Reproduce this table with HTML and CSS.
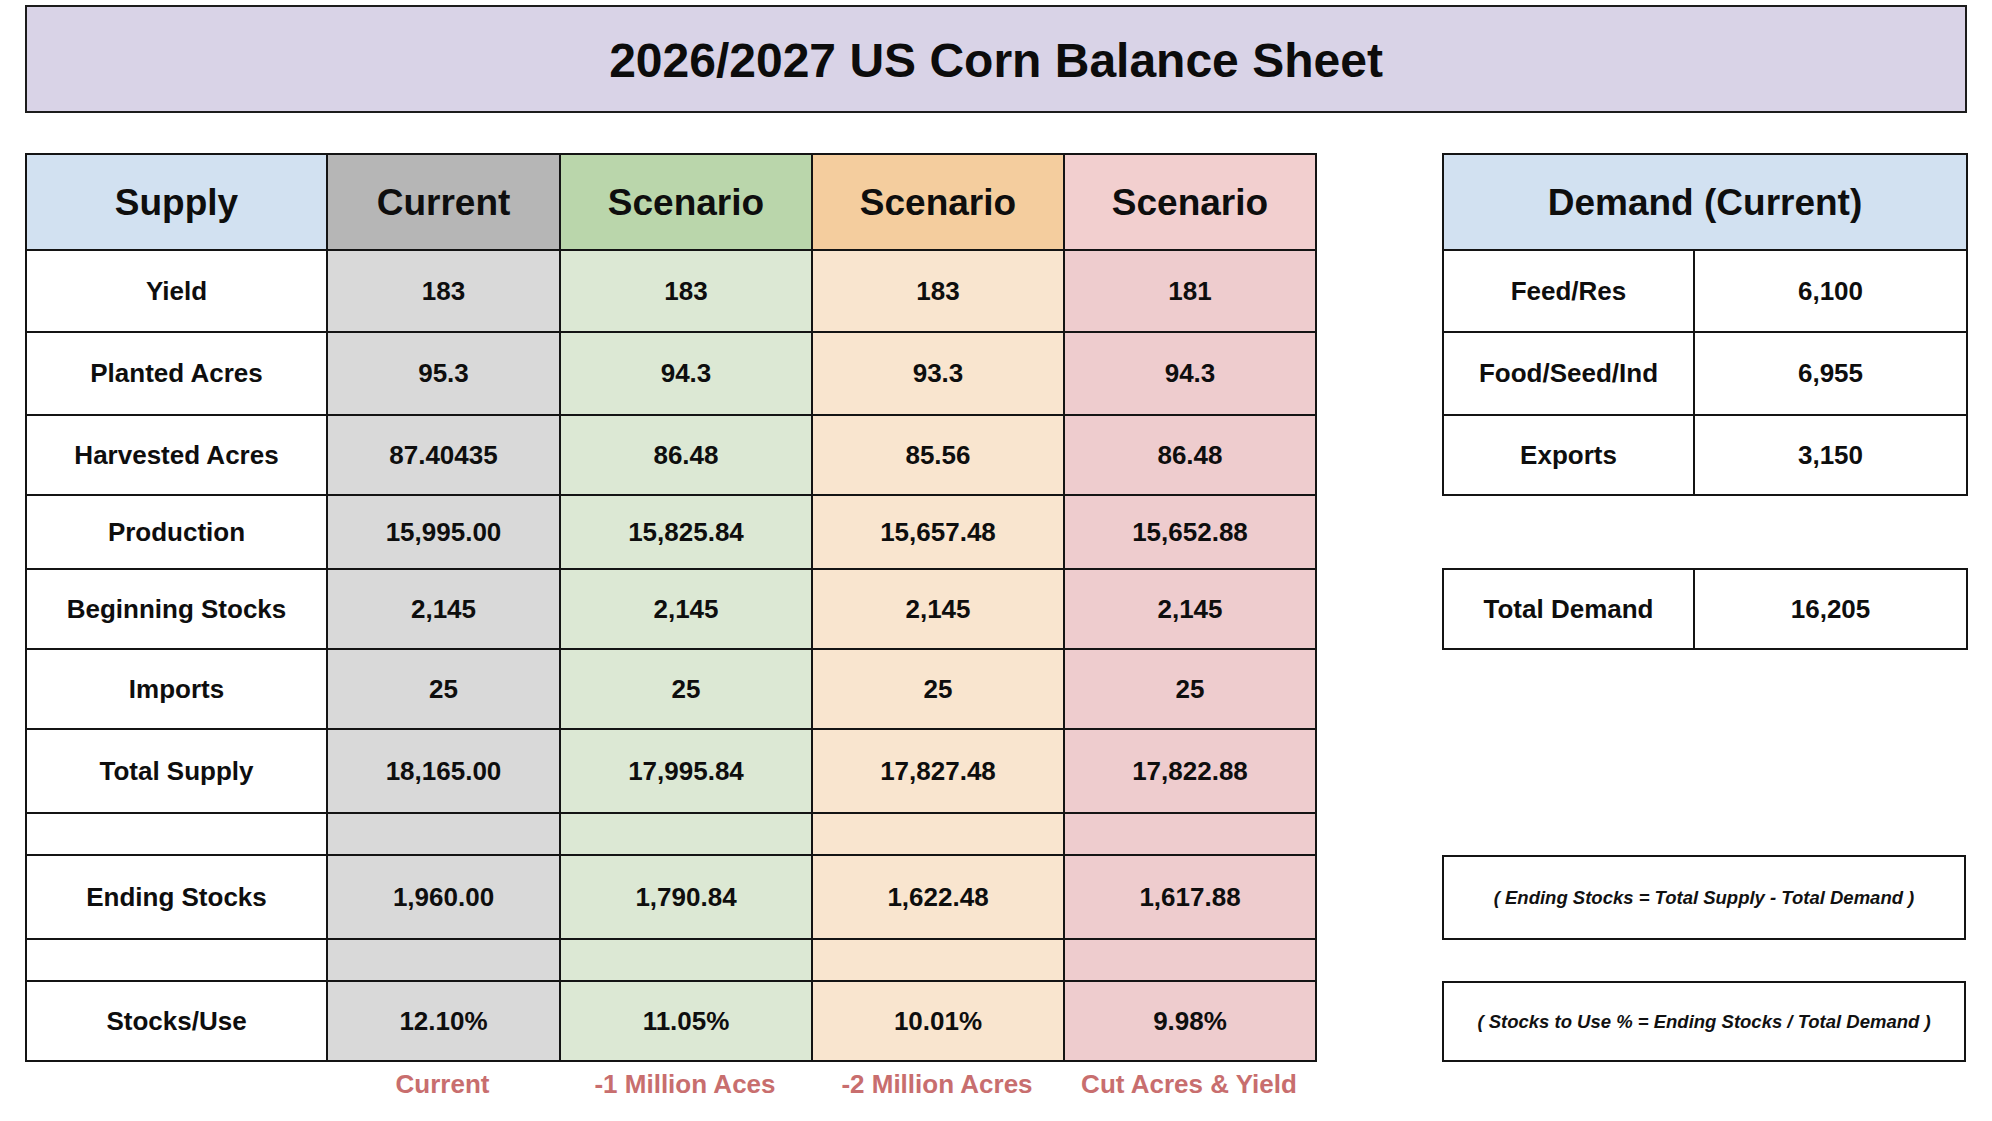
FILE: index.html
```html
<!DOCTYPE html>
<html lang="en">
<head>
<meta charset="utf-8">
<title>2026/2027 US Corn Balance Sheet</title>
<link rel="stylesheet" href="styles.css">
</head>
<body>
<div class="page">
  <header class="title-box">2026/2027 US Corn Balance Sheet</header>
  <div class="main">
    <section class="supply">
      <table class="sheet supply-table">
        <colgroup>
          <col class="c-label"><col class="c-cur"><col class="c-s1"><col class="c-s2"><col class="c-s3">
        </colgroup>
        <tr class="r-head">
          <th class="h-blue">Supply</th>
          <th class="h-gray">Current</th>
          <th class="h-green">Scenario</th>
          <th class="h-orange">Scenario</th>
          <th class="h-red">Scenario</th>
        </tr>
        <tr class="r-yield"><td>Yield</td><td class="gray">183</td><td class="green">183</td><td class="orange">183</td><td class="red">181</td></tr>
        <tr class="r-planted"><td>Planted Acres</td><td class="gray">95.3</td><td class="green">94.3</td><td class="orange">93.3</td><td class="red">94.3</td></tr>
        <tr class="r-harv"><td>Harvested Acres</td><td class="gray">87.40435</td><td class="green">86.48</td><td class="orange">85.56</td><td class="red">86.48</td></tr>
        <tr class="r-prod"><td>Production</td><td class="gray">15,995.00</td><td class="green">15,825.84</td><td class="orange">15,657.48</td><td class="red">15,652.88</td></tr>
        <tr class="r-beg"><td>Beginning Stocks</td><td class="gray">2,145</td><td class="green">2,145</td><td class="orange">2,145</td><td class="red">2,145</td></tr>
        <tr class="r-imp"><td>Imports</td><td class="gray">25</td><td class="green">25</td><td class="orange">25</td><td class="red">25</td></tr>
        <tr class="r-total"><td>Total Supply</td><td class="gray">18,165.00</td><td class="green">17,995.84</td><td class="orange">17,827.48</td><td class="red">17,822.88</td></tr>
        <tr class="r-blank"><td></td><td class="gray"></td><td class="green"></td><td class="orange"></td><td class="red"></td></tr>
        <tr class="r-end"><td>Ending Stocks</td><td class="gray">1,960.00</td><td class="green">1,790.84</td><td class="orange">1,622.48</td><td class="red">1,617.88</td></tr>
        <tr class="r-blank"><td></td><td class="gray"></td><td class="green"></td><td class="orange"></td><td class="red"></td></tr>
        <tr class="r-su"><td>Stocks/Use</td><td class="gray">12.10%</td><td class="green">11.05%</td><td class="orange">10.01%</td><td class="red">9.98%</td></tr>
      </table>
      <div class="labels">
        <span class="lab lab-blank"></span>
        <span class="lab lab-cur">Current</span>
        <span class="lab lab-s1">-1 Million Aces</span>
        <span class="lab lab-s2">-2 Million Acres</span>
        <span class="lab lab-s3">Cut Acres &amp; Yield</span>
      </div>
    </section>
    <aside class="demand">
      <table class="sheet demand-table">
        <colgroup><col class="d-label"><col class="d-val"></colgroup>
        <tr class="r-head"><th class="h-blue" colspan="2">Demand (Current)</th></tr>
        <tr class="r-yield"><td>Feed/Res</td><td>6,100</td></tr>
        <tr class="r-planted"><td>Food/Seed/Ind</td><td>6,955</td></tr>
        <tr class="r-harv"><td>Exports</td><td>3,150</td></tr>
      </table>
      <table class="sheet total-table">
        <colgroup><col class="d-label"><col class="d-val"></colgroup>
        <tr class="r-beg"><td>Total Demand</td><td>16,205</td></tr>
      </table>
      <div class="formula f-end">( Ending Stocks = Total Supply - Total Demand )</div>
      <div class="formula f-su">( Stocks to Use % = Ending Stocks / Total Demand )</div>
    </aside>
  </div>
</div>
</body>
</html>
```

FILE: styles.css
```css
* { box-sizing: border-box; }
html, body { margin: 0; padding: 0; background: #ffffff; }
body {
  font-family: "Liberation Sans", Arial, sans-serif;
  color: #111111;
}
.page {
  width: 1992px;
  padding: 5px 25px 0 25px;
}
.title-box {
  height: 108px;
  border: 2px solid #1c1c1c;
  background: #d9d3e7;
  display: flex;
  align-items: center;
  justify-content: center;
  font-size: 48px;
  font-weight: bold;
  color: #0c0c0c;
  padding-top: 2px;
}
.main {
  display: flex;
  align-items: flex-start;
  gap: 127px;
  margin-top: 40px;
}
.supply { width: 1290px; }
.demand { width: 524px; display: flex; flex-direction: column; }

.sheet {
  border-collapse: collapse;
  table-layout: fixed;
}
.sheet th, .sheet td {
  border: 2px solid #141414;
  text-align: center;
  vertical-align: middle;
  padding: 0;
  font-weight: bold;
  font-size: 26px;
  color: #0e0e0e;
}
.sheet th { font-size: 37px; padding-top: 2px; }

.supply-table { width: 1290px; }
.c-label { width: 301px; }
.c-cur { width: 233px; }
.c-s1 { width: 252px; }
.c-s2 { width: 252px; }
.c-s3 { width: 252px; }

.r-head { height: 96px; }
.r-yield { height: 82px; }
.r-planted { height: 83px; }
.r-harv { height: 80px; }
.r-prod { height: 74px; }
.r-beg { height: 80px; }
.r-imp { height: 80px; }
.r-total { height: 84px; }
.r-blank { height: 42px; }
.r-end { height: 84px; }
.r-su { height: 80px; }

.h-blue { background: #d2e1f1; }
.h-gray { background: #b6b6b6; }
.h-green { background: #bad6ab; }
.h-orange { background: #f4cd9e; }
.h-red { background: #f2cfcf; }
.gray { background: #d9d9d9; }
.green { background: #dce8d4; }
.orange { background: #f9e5cf; }
.red { background: #eeccce; }

.labels {
  display: grid;
  grid-template-columns: 301px 233px 252px 252px 252px;
  height: 44px;
  align-items: center;
}
.lab {
  text-align: center;
  font-size: 26px;
  font-weight: bold;
  color: #c86e6e;
}

.demand-table, .total-table { width: 524px; }
.d-label { width: 251px; }
.d-val { width: 273px; }
.total-table { margin-top: 72px; }

.formula {
  border: 2px solid #141414;
  display: flex;
  align-items: center;
  justify-content: center;
  font-size: 18.5px;
  font-weight: bold;
  font-style: italic;
  color: #111111;
}
.f-end { height: 85px; margin-top: 205px; }
.f-su { height: 81px; margin-top: 41px; }
```
